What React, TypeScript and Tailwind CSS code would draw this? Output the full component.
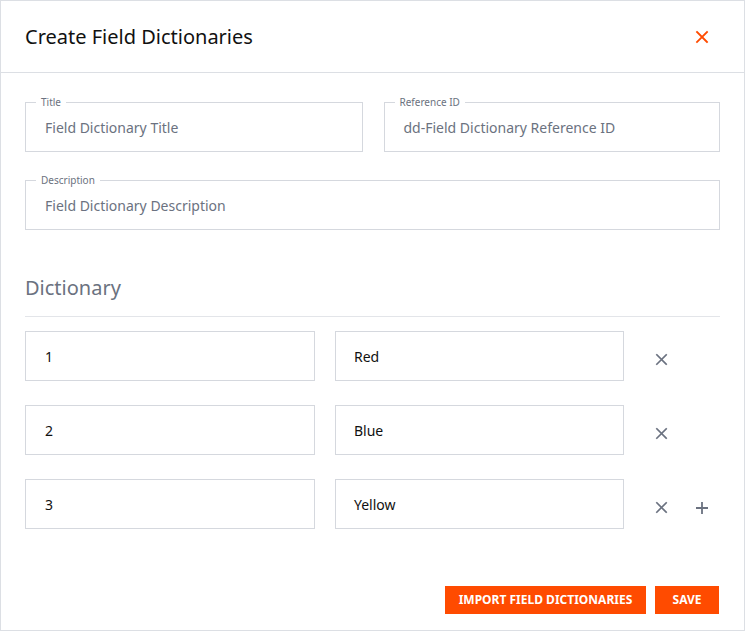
const Field = ({ label, value, className = "" }: { label: string; value: string; className?: string }) => (
  <div className={`relative h-[50px] border border-[#d5d8de] ${className}`}>
    <span className="absolute -top-[7px] left-[10px] bg-white px-[5px] text-[10px] leading-[12px] text-[#6b7280]">
      {label}
    </span>
    <div className="flex h-full items-center px-[19px] text-[14px] text-[#6b7280]">{value}</div>
  </div>
);

const X = ({ color, size = 14 }: { color: string; size?: number }) => (
  <svg width={size} height={size} viewBox="0 0 14 14" stroke={color} strokeWidth="1.8" strokeLinecap="square">
    <path d="M2 2L12 12M12 2L2 12" />
  </svg>
);

const rows = [
  ["1", "Red"],
  ["2", "Blue"],
  ["3", "Yellow"],
];

export default function App() {
  return (
    <div className="h-[631px] w-[745px] border border-[#dcdfe4] bg-white font-['Roboto',sans-serif]">
      <div className="flex h-[72px] items-center justify-between border-b border-[#dcdfe4] pl-[24px] pr-[35px]">
        <h1 className="text-[20px] text-[#111]">Create Field Dictionaries</h1>
        <X color="#ff4b00" size={14} />
      </div>
      <div className="px-[24px] pt-[29px]">
        <div className="flex gap-[21px]">
          <Field label="Title" value="Field Dictionary Title" className="w-[338px]" />
          <Field label="Reference ID" value="dd-Field Dictionary Reference ID" className="w-[337px]" />
        </div>
        <Field label="Description" value="Field Dictionary Description" className="mt-[28px] w-[695px]" />
        <h2 className="mt-[43px] border-b border-[#e3e5e9] pb-[13px] text-[20px] text-[#6b7280]">Dictionary</h2>
        <div className="mt-[14px] flex flex-col gap-[24px]">
          {rows.map(([k, v], i) => (
            <div key={k} className="flex items-center">
              <div className="flex h-[50px] w-[290px] items-center border border-[#d5d8de] px-[19px] text-[14px] text-[#111]">{k}</div>
              <div className="ml-[20px] flex h-[50px] w-[289px] items-center border border-[#d5d8de] px-[18px] text-[14px] text-[#111]">{v}</div>
              <div className="ml-[31px] mt-[7px] flex items-center gap-[27px]">
                <X color="#6b7280" size={13} />
                {i === rows.length - 1 && (
                  <svg width="14" height="14" viewBox="0 0 14 14" stroke="#6b7280" strokeWidth="1.8">
                    <path d="M7 1V13M1 7H13" />
                  </svg>
                )}
              </div>
            </div>
          ))}
        </div>
        <div className="mt-[57px] flex justify-end gap-[9px] pr-[1px]">
          <button className="h-[28px] w-[201px] bg-[#ff4b00] text-[12px] font-bold text-white">IMPORT FIELD DICTIONARIES</button>
          <button className="h-[28px] w-[64px] bg-[#ff4b00] text-[12px] font-bold text-white">SAVE</button>
        </div>
      </div>
    </div>
  );
}
